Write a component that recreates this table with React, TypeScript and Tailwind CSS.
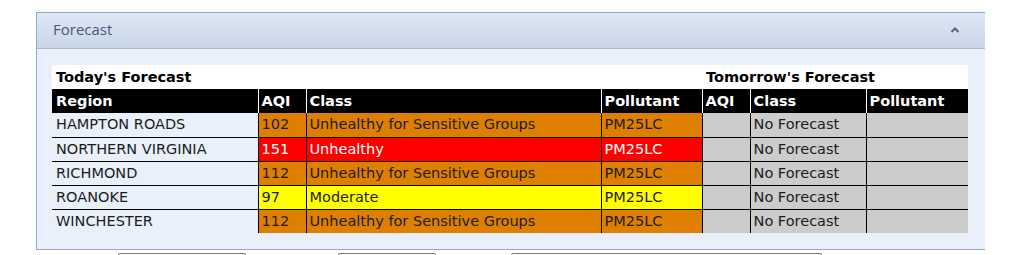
import React from "react";

type Row = {
  region: string;
  aqi: string;
  cls: string;
  pollutant: string;
  color: string;
};

const rows: Row[] = [
  { region: "HAMPTON ROADS", aqi: "102", cls: "Unhealthy for Sensitive Groups", pollutant: "PM25LC", color: "orange" },
  { region: "NORTHERN VIRGINIA", aqi: "151", cls: "Unhealthy", pollutant: "PM25LC", color: "red" },
  { region: "RICHMOND", aqi: "112", cls: "Unhealthy for Sensitive Groups", pollutant: "PM25LC", color: "orange" },
  { region: "ROANOKE", aqi: "97", cls: "Moderate", pollutant: "PM25LC", color: "yellow" },
  { region: "WINCHESTER", aqi: "112", cls: "Unhealthy for Sensitive Groups", pollutant: "PM25LC", color: "orange" },
];

const cellColor: Record<string, string> = {
  orange: "bg-[#df7f00] text-[#1c1c1c]",
  red: "bg-[#ff0000] text-white",
  yellow: "bg-[#ffff00] text-[#1c1c1c]",
};

const App = () => {
  return (
    <div className="w-[1014px] h-[255px] bg-white overflow-hidden pt-[12px] font-['DejaVu_Sans',Verdana,sans-serif]">
      <div className="ml-[36px] w-[949px] border-l border-t border-b border-[#94a9c9] bg-[#e9f0fa]">
        {/* Panel header */}
        <div className="h-[36px] flex items-center justify-between px-[16px] pb-[2px] bg-gradient-to-b from-[#dde7f5] to-[#cad7e9] border-b border-[#a7b9d3]">
          <span className="font-['Open_Sans',sans-serif] text-[15px] text-[#4a5873]">Forecast</span>
          <svg width="12" height="8" viewBox="0 0 12 8" className="mr-[8px]">
            <path d="M2.5 6 L6 2.5 L9.5 6" stroke="#5b6679" strokeWidth="2" fill="none" />
          </svg>
        </div>

        {/* Panel body */}
        <div className="pt-[16px] pl-[15px] pr-[17px] h-[200px]">
          <table className="w-[916px] border-collapse text-[14.5px] leading-[23px] table-fixed">
            <colgroup>
              <col className="w-[206px]" />
              <col className="w-[48px]" />
              <col className="w-[295px]" />
              <col className="w-[101px]" />
              <col className="w-[48px]" />
              <col className="w-[116px]" />
              <col className="w-[102px]" />
            </colgroup>
            <thead>
              <tr className="bg-white font-bold text-black h-[24px]">
                <th colSpan={4} className="text-left px-[4px]">Today's Forecast</th>
                <th colSpan={3} className="text-left px-[4px]">Tomorrow's Forecast</th>
              </tr>
              <tr className="bg-black text-white font-bold h-[24px]">
                <th className="text-left px-[4px]">Region</th>
                <th className="text-left px-[3px] border-l border-white">AQI</th>
                <th className="text-left px-[3px] border-l border-white">Class</th>
                <th className="text-left px-[3px] border-l border-white">Pollutant</th>
                <th className="text-left px-[3px] border-l border-white">AQI</th>
                <th className="text-left px-[3px] border-l border-white">Class</th>
                <th className="text-left px-[3px] border-l border-white">Pollutant</th>
              </tr>
            </thead>
            <tbody>
              {rows.map((r, i) => (
                <tr key={r.region} className={`h-[24px] ${i < rows.length - 1 ? "border-b border-black" : ""}`}>
                  <td className="px-[4px] text-[#1c1c1c] whitespace-nowrap">{r.region}</td>
                  <td className={`px-[3px] border-l border-black ${cellColor[r.color]}`}>{r.aqi}</td>
                  <td className={`px-[3px] border-l border-black whitespace-nowrap ${cellColor[r.color]}`}>{r.cls}</td>
                  <td className={`px-[3px] border-l border-black ${cellColor[r.color]}`}>{r.pollutant}</td>
                  <td className="px-[3px] border-l border-black bg-[#cccccc]"></td>
                  <td className="px-[3px] border-l border-black bg-[#cccccc] text-[#1c1c1c] whitespace-nowrap">No Forecast</td>
                  <td className="px-[3px] border-l border-black bg-[#cccccc]"></td>
                </tr>
              ))}
            </tbody>
          </table>
        </div>
      </div>

      {/* Controls below panel */}
      <div className="flex mt-[3px]">
        <div className="ml-[118px] w-[128px] h-[10px] border border-[#7a7a7a] rounded-[2px] bg-white" />
        <div className="ml-[92px] w-[98px] h-[10px] border border-[#7a7a7a] rounded-[2px] bg-white" />
        <div className="ml-[75px] w-[311px] h-[10px] border border-[#7a7a7a] rounded-[2px] bg-white" />
      </div>
    </div>
  );
};

export default App;
